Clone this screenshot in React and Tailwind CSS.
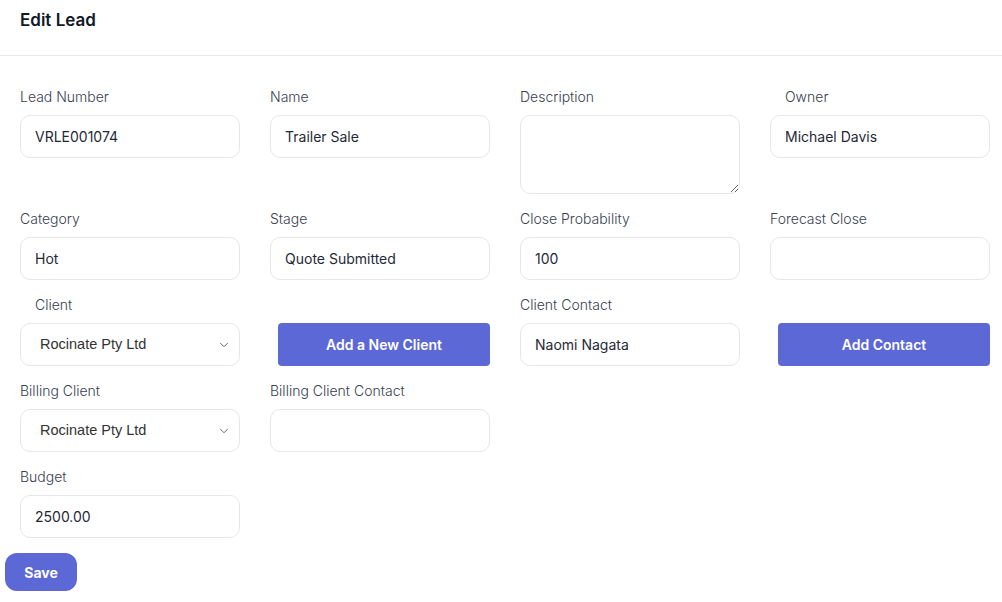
import { ChevronDown } from "lucide-react";

const font = { fontFamily: "Inter, 'Noto Sans', sans-serif" };

function Label({ children, indent }) {
  return (
    <div
      className={`h-6 leading-6 text-[14px] font-light text-[#374151] mb-1.5 ${indent ? "pl-[15px]" : ""}`}
    >
      {children}
    </div>
  );
}

function TextField({ label, value, indent }) {
  return (
    <div>
      <Label indent={indent}>{label}</Label>
      <div className="h-[43px] w-[220px] rounded-[10px] border border-[#e5e7eb] bg-white px-[14px] flex items-center text-[14px] text-[#1f2937]">
        {value}
      </div>
    </div>
  );
}

function SelectField({ label, value, indent }) {
  return (
    <div>
      <Label indent={indent}>{label}</Label>
      <div className="h-[43px] w-[220px] rounded-[10px] border border-[#e5e7eb] bg-white pl-[19px] pr-[8px] flex items-center justify-between text-[14.5px] text-[#333]">
        <span style={{ fontFamily: "'Liberation Sans', Arial, sans-serif" }}>{value}</span>
        <ChevronDown size={14} strokeWidth={1.5} className="text-[#555]" />
      </div>
    </div>
  );
}

function ActionButton({ children }) {
  return (
    <div>
      <div className="h-6 mb-1.5" />
      <button className="ml-2 h-[43px] w-[212px] rounded-[4px] bg-[#5c68d6] text-white text-[14px] font-semibold">
        {children}
      </button>
    </div>
  );
}

export default function App() {
  return (
    <div className="min-h-screen bg-white" style={font}>
      <header className="h-[56px] border-b border-[#e8e8ec] px-5 pt-[8px]">
        <h1 className="text-[17px] font-semibold text-[#111827] leading-6">Edit Lead</h1>
      </header>

      <main className="px-5 pt-[29px]">
        <div className="grid grid-cols-[220px_220px_220px_220px] gap-x-[30px] gap-y-[13px] items-start">
          <TextField label="Lead Number" value="VRLE001074" />
          <TextField label="Name" value="Trailer Sale" />
          <div>
            <Label>Description</Label>
            <textarea
              className="block h-[79px] w-[220px] rounded-[10px] border border-[#e5e7eb] bg-white px-[14px] py-2 text-[14px] outline-none"
              defaultValue=""
            />
          </div>
          <TextField label="Owner" value="Michael Davis" indent />

          <TextField label="Category" value="Hot" />
          <TextField label="Stage" value="Quote Submitted" />
          <TextField label="Close Probability" value="100" />
          <TextField label="Forecast Close" value="" />

          <SelectField label="Client" value="Rocinate Pty Ltd" indent />
          <ActionButton>Add a New Client</ActionButton>
          <TextField label="Client Contact" value="Naomi Nagata" />
          <ActionButton>Add Contact</ActionButton>

          <SelectField label="Billing Client" value="Rocinate Pty Ltd" />
          <TextField label="Billing Client Contact" value="" />
          <div />
          <div />

          <TextField label="Budget" value="2500.00" />
        </div>
      </main>

      <div className="px-[5px] pt-[15px]">
        <button className="h-[38px] w-[72px] rounded-[12px] bg-[#5c68d6] text-white text-[14px] font-bold">
          Save
        </button>
      </div>
    </div>
  );
}
